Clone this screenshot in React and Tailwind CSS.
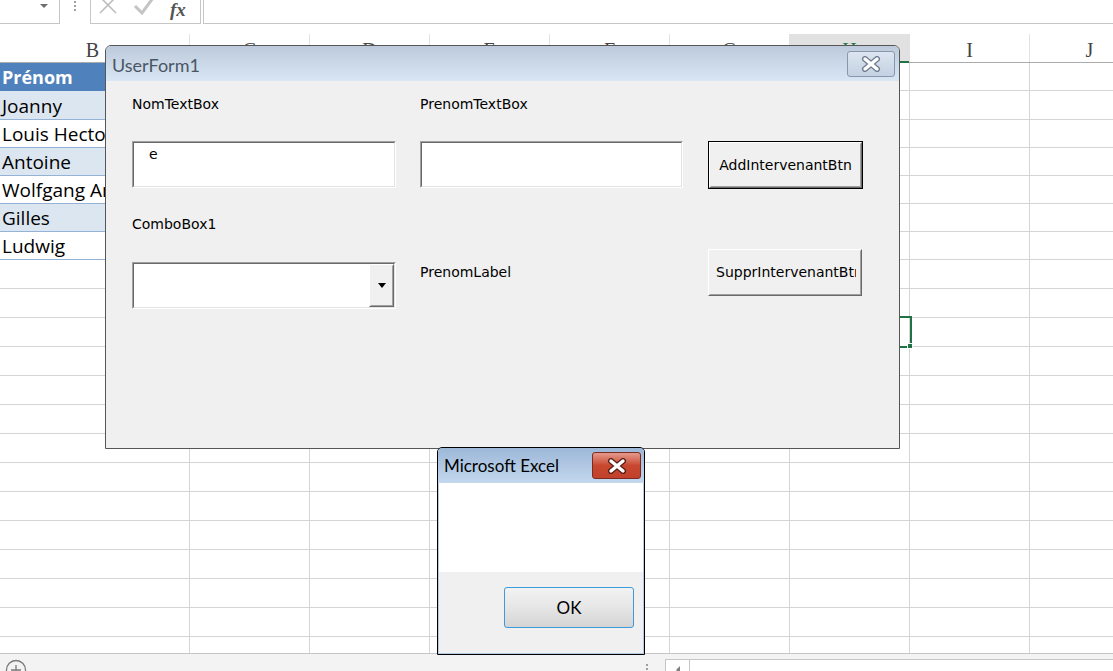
const COLS = ["C", "D", "E", "F", "G", "H", "I", "J"];

const TABLE = [
  { name: "Prénom", h: "h-[28px]", cell: "bg-[#4f81bd] text-white font-bold text-[18px] border-[#4f81bd]" },
  { name: "Joanny", h: "h-[29px]", cell: "bg-[#dce6f1] text-black text-[19px] border-[#95b3d7]" },
  { name: "Louis Hector", h: "h-[28px]", cell: "bg-white text-black text-[19px] border-[#95b3d7]" },
  { name: "Antoine", h: "h-[28px]", cell: "bg-[#dce6f1] text-black text-[19px] border-[#95b3d7]" },
  { name: "Wolfgang Amadeus", h: "h-[28px]", cell: "bg-white text-black text-[19px] border-[#95b3d7]" },
  { name: "Gilles", h: "h-[28px]", cell: "bg-[#dce6f1] text-black text-[19px] border-[#95b3d7]" },
  { name: "Ludwig", h: "h-[28px]", cell: "bg-white text-black text-[19px] border-[#95b3d7]" },
];

const EMPTY_ROWS = 14;

function GridCells() {
  return COLS.map(c => (
    <div key={c} className="w-[120px] shrink-0 border-r border-b border-[#d4d4d4]" />
  ));
}

function Sunken({ className = "", children }) {
  return (
    <div className={"border border-t-[#a0a0a0] border-l-[#a0a0a0] border-b-white border-r-white " + className}>
      <div className="h-full border border-t-[#696969] border-l-[#696969] border-b-[#e3e3e3] border-r-[#e3e3e3] bg-white flex">
        {children}
      </div>
    </div>
  );
}

function Raised({ className = "", children }) {
  return (
    <div className={"border border-t-white border-l-white border-b-[#696969] border-r-[#696969] bg-[#f0f0f0] " + className}>
      <div className="h-full border border-t-[#f0f0f0] border-l-[#f0f0f0] border-b-[#a0a0a0] border-r-[#a0a0a0] flex items-center">
        {children}
      </div>
    </div>
  );
}

function CloseGlyph({ outline }) {
  return (
    <svg width="20" height="16" viewBox="0 0 20 16">
      <path d="M4 3 L16 13 M16 3 L4 13" stroke={outline} strokeWidth="6" strokeLinecap="round" />
      <path d="M4 3 L16 13 M16 3 L4 13" stroke="#ffffff" strokeWidth="3.4" strokeLinecap="round" />
    </svg>
  );
}

function UserForm() {
  return (
    <div className="absolute left-[105px] top-[45px] w-[795px] h-[404px] flex flex-col border border-[#565656] rounded-t-[6px] bg-[#f0f0f0] overflow-hidden font-['DejaVu_Sans',sans-serif] text-[14px] leading-[17px] text-black">
      <div className="h-[35px] shrink-0 flex items-start justify-between pl-[6px] pr-[4px] bg-linear-to-b from-[#bccadb] to-[#d9e6f4]">
        <span className="mt-[8px] font-['Lato',sans-serif] text-[18px] leading-[22px] text-[#4a5664]">UserForm1</span>
        <div className="mt-[5px] w-[48px] h-[26px] rounded-[3px] border border-[#8797ad] bg-linear-to-b from-[#dce5f0] to-[#c4d1e2] flex items-center justify-center">
          <CloseGlyph outline="#6f7d90" />
        </div>
      </div>

      <div className="flex-1 flex flex-col pl-[26px] pt-[15px]">
        <div className="grid grid-cols-[264px_264px_155px] gap-x-[24px] h-[17px]">
          <span>NomTextBox</span>
          <span>PrenomTextBox</span>
        </div>

        <div className="grid grid-cols-[264px_264px_155px] gap-x-[24px] mt-[28px] h-[48px] items-start">
          <Sunken className="h-[47px]">
            <span className="pl-[15px] pt-[3px]">e</span>
          </Sunken>
          <Sunken className="w-[263px] h-[47px]" />
          <div className="h-[48px] border border-black">
            <Raised className="h-full">
              <span className="w-full text-center whitespace-nowrap">AddIntervenantBtn</span>
            </Raised>
          </div>
        </div>

        <div className="mt-[27px] h-[17px]">ComboBox1</div>

        <div className="grid grid-cols-[264px_264px_155px] gap-x-[24px] mt-[16px] items-start">
          <Sunken className="mt-[13px] h-[47px]">
            <div className="flex-1" />
            <Raised className="w-[25px] h-full">
              <div className="w-full flex justify-center">
                <div className="w-0 h-0 border-l-[4px] border-r-[4px] border-t-[5px] border-l-transparent border-r-transparent border-t-black" />
              </div>
            </Raised>
          </Sunken>
          <span className="mt-[15px]">PrenomLabel</span>
          <Raised className="w-[154px] h-[47px]">
            <div className="w-full pl-[6px] pr-[4px]">
              <div className="overflow-hidden whitespace-nowrap">SupprIntervenantBtn</div>
            </div>
          </Raised>
        </div>
      </div>
    </div>
  );
}

function MsgBox() {
  return (
    <div className="absolute left-[437px] top-[447px] w-[208px] h-[208px] flex flex-col border border-black rounded-t-[5px] overflow-hidden font-['Lato',sans-serif] text-black">
      <div className="h-[35px] shrink-0 flex items-start justify-between pl-[6px] pr-[3px] bg-linear-to-b from-[#9cb7d8] to-[#c4d8ee]">
        <span className="mt-[8px] text-[17px] leading-[20px]">Microsoft Excel</span>
        <div className="mt-[4px] w-[49px] h-[27px] rounded-[3px] border border-[#7d2b20] bg-linear-to-b from-[#e4998c] via-[#c8472f] to-[#c2412a] flex items-center justify-center">
          <CloseGlyph outline="#5a2018" />
        </div>
      </div>
      <div className="flex-1 flex flex-col border-x border-b border-[#b4cbe6]">
        <div className="h-[89px] shrink-0 bg-white" />
        <div className="flex-1 bg-[#f0f0f0] flex justify-end items-start pt-[15px] pr-[9px]">
          <div className="w-[130px] h-[41px] rounded-[3px] border border-[#3c9bd8] bg-linear-to-b from-[#f2f2f2] via-[#e6e6e6] to-[#d4d4d4] flex items-center justify-center text-[17px]">
            OK
          </div>
        </div>
      </div>
    </div>
  );
}

export default function App() {
  return (
    <div className="relative w-[1113px] h-[671px] overflow-hidden bg-white flex flex-col">
      {/* formula bar */}
      <div className="h-[24px] shrink-0 flex">
        <div className="w-[60px] h-full border-r border-b border-[#c6c6c6] flex justify-end pr-[11px] pt-[4px]">
          <div className="w-0 h-0 border-l-[4px] border-r-[4px] border-t-[4px] border-l-transparent border-r-transparent border-t-[#6d6d6d]" />
        </div>
        <div className="w-[30px] flex flex-col items-center gap-[2px] pt-[1px]">
          <div className="w-[2px] h-[2px] bg-[#a0a0a0]" />
          <div className="w-[2px] h-[2px] bg-[#a0a0a0]" />
          <div className="w-[2px] h-[2px] bg-[#a0a0a0]" />
        </div>
        <div className="w-[111px] h-full border-x border-b border-[#c6c6c6] flex items-start">
          <svg className="ml-[8px] overflow-visible" width="18" height="14" viewBox="0 0 18 14">
            <path d="M1 -3 L17 13 M17 -3 L1 13" stroke="#bdbdbd" strokeWidth="1.6" fill="none" />
          </svg>
          <svg className="ml-[17px] overflow-visible" width="20" height="15" viewBox="0 0 20 15">
            <polyline points="1,6 8,13 19,-2" stroke="#c4c4c4" strokeWidth="3" fill="none" />
          </svg>
          <span className="ml-[16px] pr-[2px] font-['Liberation_Serif',serif] italic font-bold text-[19px] leading-[20px] text-[#555]">fx</span>
        </div>
        <div className="flex-1 ml-[2px] h-full border-l border-b border-[#c6c6c6]" />
      </div>

      <div className="h-[10px] shrink-0" />

      {/* column headers */}
      <div className="h-[29px] shrink-0 flex border-b border-[#ababab] font-['Liberation_Serif',serif] text-[20px] leading-[20px]">
        <div className="w-[190px] shrink-0 border-r border-[#e1e1e1] flex justify-center pr-[4px] pt-[6px] text-[#444]">B</div>
        {COLS.map(c => (
          <div
            key={c}
            className={
              "relative w-[120px] shrink-0 border-r border-[#e1e1e1] flex justify-center pt-[6px] " +
              (c === "H" ? "bg-[#e1e1e1] text-[#217346]" : "text-[#444]")
            }
          >
            {c}
            {c === "H" && <div className="absolute left-0 right-0 -bottom-[1px] h-[2px] bg-[#217346]" />}
          </div>
        ))}
      </div>

      {/* sheet */}
      <div className="flex-1 overflow-hidden font-['Open_Sans',sans-serif]">
        {TABLE.map(r => (
          <div key={r.name} className={"flex " + r.h}>
            <div className={"w-[190px] shrink-0 border-b flex items-end pl-[2px] leading-[26px] whitespace-nowrap overflow-hidden " + r.cell}>
              {r.name}
            </div>
            <GridCells />
          </div>
        ))}
        {Array.from({ length: EMPTY_ROWS }).map((_, i) => (
          <div key={i} className="flex h-[29px]">
            <div className="w-[190px] shrink-0 border-r border-b border-[#d4d4d4]" />
            <GridCells />
          </div>
        ))}
      </div>

      {/* sheet tabs / scroll bar */}
      <div className="h-[18px] shrink-0 border-t border-[#c6c6c6] bg-[#f3f3f3] flex items-start overflow-hidden">
        <svg className="ml-[5px] mt-[5px] shrink-0" width="22" height="22" viewBox="0 0 22 22">
          <circle cx="11" cy="11" r="9.5" fill="none" stroke="#7a7a7a" strokeWidth="1.3" />
          <path d="M11 6 V16 M6 11 H16" stroke="#7a7a7a" strokeWidth="1.3" />
        </svg>
        <div className="flex-1" />
        <div className="flex flex-col gap-[2px] pt-[10px] mr-[17px]">
          <div className="w-[2px] h-[2px] bg-[#a0a0a0]" />
          <div className="w-[2px] h-[2px] bg-[#a0a0a0]" />
        </div>
        <div className="mt-[5px] w-[25px] h-[20px] shrink-0 border border-[#c6c6c6] bg-white flex justify-center pt-[6px]">
          <div className="w-0 h-0 border-t-[4px] border-b-[4px] border-r-[4px] border-t-transparent border-b-transparent border-r-[#808080]" />
        </div>
        <div className="mt-[5px] w-[423px] h-[20px] shrink-0 border-t border-[#c6c6c6] bg-white" />
      </div>

      {/* active cell H11 */}
      <div className="absolute left-[788px] top-[316px] w-[124px] h-[32px] border-2 border-[#217346]">
        <div className="absolute -right-[3px] -bottom-[3px] w-[6px] h-[6px] bg-[#217346] border border-white" />
      </div>

      <UserForm />
      <MsgBox />
    </div>
  );
}
